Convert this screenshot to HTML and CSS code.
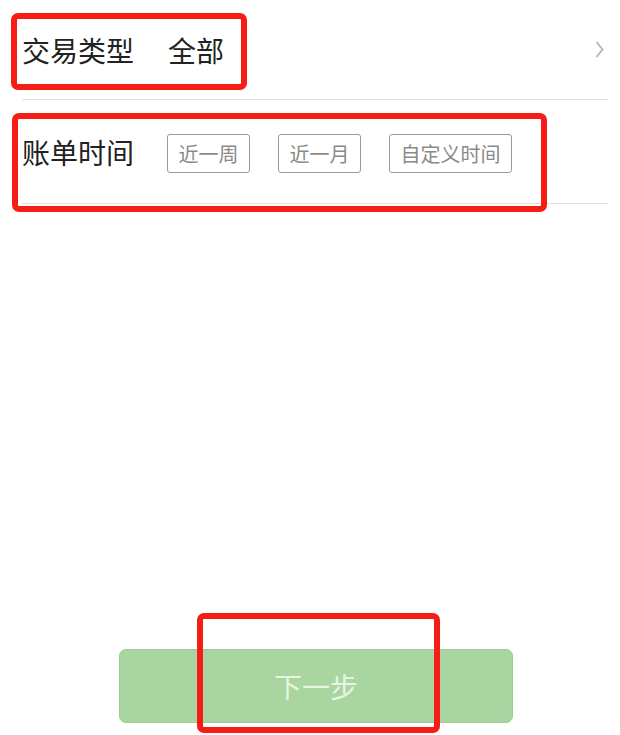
FILE: index.html
```html
<!DOCTYPE html>
<html lang="zh-CN">
<head>
  <meta charset="UTF-8" />
  <title>账单筛选</title>
  <meta name="viewport" content="width=device-width, initial-scale=1.0" />
  <link rel="stylesheet" href="styles.css">
</head>
<body>
  <div class="page">
    <div class="list">
      <div class="row row-type">
        <span class="label">交易类型</span>
        <span class="value">全部</span>
        <svg class="chevron" width="9" height="19" viewBox="0 0 9 19">
          <path d="M1.5 2 L7.5 9.5 L1.5 17" fill="none" stroke="#b5b5b5" stroke-width="1.8" />
        </svg>
      </div>
      <div class="row row-time">
        <span class="label">账单时间</span>
        <div class="chips">
          <button class="chip">近一周</button>
          <button class="chip">近一月</button>
          <button class="chip">自定义时间</button>
        </div>
      </div>
    </div>

    <div class="footer">
      <button class="next-btn">下一步</button>
    </div>

    <!-- annotation marks -->
    <div class="mark mark-type"></div>
    <div class="mark mark-time"></div>
    <div class="mark mark-next"></div>
  </div>
</body>
</html>
```

FILE: styles.css
```css
body {
  margin: 0;
  background: #fff;
  font-family: "Noto Sans CJK SC", "Noto Sans", sans-serif;
  color: #222;
}

.page {
  position: relative;
  height: 735px;
  display: flex;
  flex-direction: column;
  overflow: hidden;
}

.row {
  display: flex;
  align-items: center;
  margin: 0 12px 0 22px;
  border-bottom: 1px solid #e2e2e2;
}

.row-type {
  height: 99px;
}

.row-time {
  height: 103px;
}

.label {
  font-size: 28px;
  line-height: 1;
}

.value {
  font-size: 28px;
  line-height: 1;
  margin-left: 34px;
}

.chevron {
  margin-left: auto;
  margin-right: 4px;
  margin-top: -1px;
}

.chips {
  display: flex;
  gap: 28px;
  margin-left: 33px;
  margin-top: 4px;
}

.chip {
  height: 39px;
  padding: 0 10.5px;
  border: 1.5px solid #9a9a9a;
  border-radius: 3px;
  background: #fff;
  color: #8a8a8a;
  font-family: inherit;
  font-size: 20px;
  line-height: 1;
}

.footer {
  margin-top: auto;
  padding: 0 0 12px 119px;
}

.next-btn {
  display: block;
  width: 394px;
  height: 74px;
  border: 1px solid #9ccb93;
  border-radius: 7px;
  background: #a9d6a0;
  color: #e6f4e2;
  font-family: inherit;
  font-size: 28px;
  padding-bottom: 2px;
}

/* red highlight boxes drawn over the screen */
.mark {
  position: absolute;
  border: 6px solid #f51d16;
  border-radius: 7px;
  box-sizing: border-box;
}

.mark-type {
  left: 11px;
  top: 13px;
  width: 236px;
  height: 77px;
}

.mark-time {
  left: 12px;
  top: 113px;
  width: 535px;
  height: 99px;
}

.mark-next {
  left: 197px;
  top: 613px;
  width: 243px;
  height: 120px;
}
```
